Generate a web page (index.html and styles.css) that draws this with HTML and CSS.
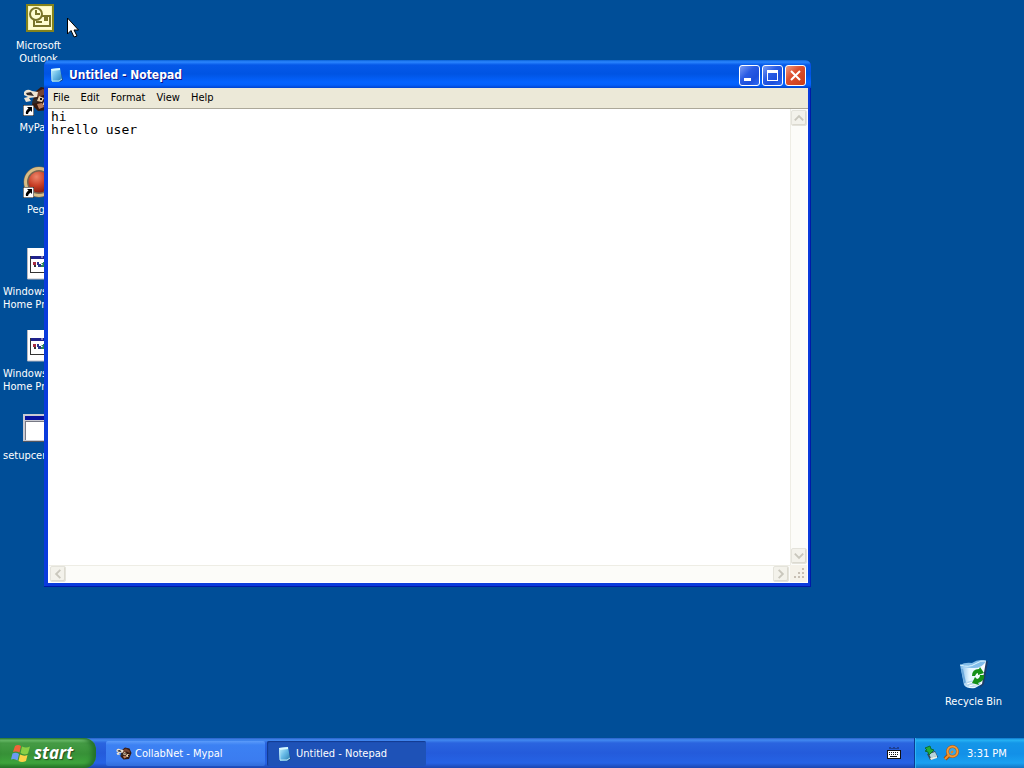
FILE: index.html
```html
<!DOCTYPE html>
<html lang="en">
<head>
<meta charset="utf-8">
<title>Desktop</title>
<link rel="stylesheet" href="styles.css">
</head>
<body>

<!-- shared shapes -->
<svg class="defs" aria-hidden="true">
  <linearGradient id="paper" x1="0" y1="0" x2="1" y2="1">
    <stop offset="0" stop-color="#c8f6ff"/><stop offset=".5" stop-color="#66b9e6"/><stop offset="1" stop-color="#297cae"/>
  </linearGradient>
  <radialGradient id="ball" cx=".4" cy=".3" r=".7">
    <stop offset="0" stop-color="#ed856a"/><stop offset=".5" stop-color="#c83e25"/><stop offset="1" stop-color="#721409"/>
  </radialGradient>
  <linearGradient id="bin" x1="0" y1="0" x2="1" y2="0">
    <stop offset="0" stop-color="#78b6e8"/><stop offset=".35" stop-color="#e4f6ff"/><stop offset="1" stop-color="#ffffff"/>
  </linearGradient>
  <symbol id="notepad" viewBox="0 0 16 16">
    <path d="M9 3h2l3 10-3 2z" fill="#194b87"/>
    <path d="M2 2l9-1 2 11-3 3H3z" fill="url(#paper)"/>
    <path d="M2 2l9-1v2l-9 1z" fill="#d8f8ff"/>
    <path d="M2.500 3L3 14h7l3-2" fill="none" stroke="#b9e7f7"/>
  </symbol>
  <symbol id="arrow" viewBox="0 0 11 11">
    <path d="M0 0h11v11H0z" fill="#000"/><path d="M.5.5h10v10H.5z" fill="#fff"/>
    <path d="M4 2h5v5L7.500 5.500Q5 7 5 9H3Q2 6 5.500 3.500z" fill="#000"/>
  </symbol>
  <symbol id="mypal" viewBox="0 0 32 32">
    <path d="M12 8l6-5 9 2 4 9-5 12-11 1-6-6z" fill="#34180f"/>
    <path d="M14 8l6-3 7 4 1 5-7-3-7 2z" fill="#754431"/>
    <path d="M1 8q3-4 8-1l6 1-1 5-8 1 2 3-5 1-2-4 4-1-4-2z" fill="#eee4d3"/>
    <path d="M3 9l5-1 3 4-7-1zM10 15l6-1-2 5-5 1z" fill="#312b2a"/>
    <path d="M16 12l5 2-2 4-5-1zM22 16l5 1-3 5-5-1z" fill="#e8cda9"/>
    <path d="M14 20l5-1 2 4-5 2z" fill="#b57958"/>
    <path d="M17 14h2v2h-2zM24 18h2v2h-2z" fill="#111"/>
  </symbol>
  <symbol id="setup" viewBox="0 0 32 32">
    <path d="M4 0h25v31H4z" fill="#fff"/><path d="M4.500 0v31H29" fill="none" stroke="#b8b8c0"/>
    <path d="M7 8h20v17H7z" fill="#333"/><path d="M8 9h18v15H8z" fill="#fff"/>
    <path d="M8 8h18v3H8z" fill="#20228c"/><path d="M18 9h2m1 0h2m1 0h1" stroke="#d6d6ec"/>
    <path d="M10 14h3v3h-3z" fill="#a72c42"/><path d="M11 17h2v2h-2z" fill="#333"/>
    <path d="M14 14h2v2h2v3h-3v-2h-1z" fill="#2b3690"/>
    <path d="M18 15h2v-1h2v5h-4v-2h2z" fill="#278255"/>
  </symbol>
</svg>

<main class="desktop">
  <div class="icons">
    <div class="icon">
      <svg viewBox="0 0 32 32">
        <path d="M3 2h28v28H3z" fill="#85831c"/><path d="M5 4h24v24H5z" fill="#f8f6b8"/>
        <path d="M6 5h22v22H6z" fill="#fffdd1"/>
        <circle cx="13" cy="12" r="6" fill="#fffdd1" stroke="#79752b" stroke-width="2"/>
        <path d="M13 8v4h4M11 18v6h16V14h-8" fill="none" stroke="#79752b" stroke-width="2"/>
        <path d="M21 15h4v4h-4z" fill="#79752b"/><path d="M13 20h6" stroke="#79752b" stroke-width="2"/>
      </svg>
      <span>Microsoft Outlook</span>
    </div>
    <div class="icon">
      <svg viewBox="0 0 32 32">
        <use href="#mypal" width="32" height="32"/>
        <use href="#arrow" y="21" width="11" height="11"/>
      </svg>
      <span>MyPal 6</span>
    </div>
    <div class="icon">
      <svg viewBox="0 0 32 32">
        <circle cx="16" cy="16" r="13" fill="url(#ball)" stroke="#766450" stroke-width="5"/>
        <circle cx="16" cy="16" r="13.500" fill="none" stroke="#d8bd86" stroke-width="3"/>
        <use href="#arrow" y="21" width="11" height="11"/>
      </svg>
      <span>Pegs</span>
    </div>
    <div class="icon long">
      <svg viewBox="0 0 32 32"><use href="#setup"/></svg>
      <span>Windows<br>Home Pro</span>
    </div>
    <div class="icon long">
      <svg viewBox="0 0 32 32"><use href="#setup"/></svg>
      <span>Windows<br>Home Pro</span>
    </div>
    <div class="icon long">
      <svg viewBox="0 0 32 32">
        <path d="M0 2h32v28H0z" fill="#55565e"/><path d="M0 2h31v27H0z" fill="#c9cad2"/>
        <path d="M2 4h28v4H2z" fill="#0711a0"/><path d="M2 9h28v19H2z" fill="#777985"/><path d="M3 10h27v18H3z" fill="#fff"/>
      </svg>
      <span>setupcer</span>
    </div>
  </div>

  <div class="icon recycle">
    <svg viewBox="0 0 32 32">
      <path d="M27 4l3-1-4 23-4 4z" fill="#1d3c68"/>
      <path d="M2 7q9 3 15-1 6-5 11-3l-4 23-7 4q-8 1-11-3z" fill="url(#bin)"/>
      <path d="M2 7q5-3 12-2 7-5 14-2-4 8-14 7Q6 10 2 7z" fill="#82bdea"/>
      <path d="M2 7q9 3 15-1 6-4 11-3" fill="none" stroke="#dbf5ff"/>
      <path d="M4 11l3 14" stroke="#6ba9dc" stroke-width="2"/>
      <path d="M7 25q7-5 16 0-5 6-14 3z" fill="#b6d8ee"/>
      <path d="M9 26q5-3 10-1m-8 3q5-2 9-1" fill="none" stroke="#fff"/>
      <path d="M14 18q0-7 7-7l1-2 4 6-6 2v-2q-2 0-3 3zM26 17q1 6-6 8l1 2-7-2 3-6 2 2q3-1 3-4z" fill="#159019"/>
    </svg>
    <span>Recycle Bin</span>
  </div>

  <section class="window">
    <header class="titlebar">
      <svg class="small" viewBox="0 0 16 16"><use href="#notepad"/></svg>
      <h1>Untitled - Notepad</h1>
      <button class="ctl" aria-label="Minimize"><svg viewBox="0 0 21 21"><path d="M5 13h7v3H5z" fill="#fff"/></svg></button>
      <button class="ctl" aria-label="Maximize"><svg viewBox="0 0 21 21"><path d="M5 5h11v11H5zm1 3v7h9V8z" fill="#fff" fill-rule="evenodd"/></svg></button>
      <button class="ctl close" aria-label="Close"><svg viewBox="0 0 21 21"><path d="M6 6l9 9m0-9l-9 9" stroke="#fff" stroke-width="2"/></svg></button>
    </header>
    <nav class="menubar">
      <button>File</button>
      <button>Edit</button>
      <button>Format</button>
      <button>View</button>
      <button>Help</button>
    </nav>
    <div class="editor">
      <textarea aria-label="Text" spellcheck="false">hi
hrello user</textarea>
      <div class="vscroll">
        <button aria-label="Scroll up"><svg viewBox="0 0 15 15"><path d="M3 10l4.500-4.500L12 10"/></svg></button>
        <button aria-label="Scroll down"><svg viewBox="0 0 15 15"><path d="M3 5l4.500 4.500L12 5"/></svg></button>
      </div>
      <div class="hscroll">
        <button aria-label="Scroll left"><svg viewBox="0 0 15 15"><path d="M10 3L5.500 7.500 10 12"/></svg></button>
        <button aria-label="Scroll right"><svg viewBox="0 0 15 15"><path d="M5 3l4.500 4.500L5 12"/></svg></button>
      </div>
      <svg class="grip" viewBox="0 0 17 17"><path d="M12 3h2v2h-2zM8 7h2v2H8zM12 7h2v2h-2zM4 11h2v2H4zM8 11h2v2H8zM12 11h2v2h-2z" fill="#c8c0b4"/></svg>
    </div>
  </section>

  <svg class="cursor" viewBox="0 0 12 21"><path d="M.5 1v16l3.500-3.500L7 20l3-1-3-6h4.500z" fill="#fff" stroke="#000"/></svg>
</main>

<footer class="taskbar">
  <button class="start">
    <svg viewBox="0 0 20 20">
      <path d="M5 3q3-2 6 0L9.500 9.500Q6 8 3 9z" fill="#f0643a"/>
      <path d="M12 3.500q4 2 8 0L18 10.500q-4 2-7.500-.5z" fill="#88cf45"/>
      <path d="M2.500 10.500Q6 9 9 11l-1.500 6.500Q4 15 1 16.500z" fill="#6b9bf2"/>
      <path d="M10 11.500q4 2 7.500.5L16 18q-4 2-7.500 0z" fill="#fbd247"/>
    </svg>
    start
  </button>
  <div class="tasks">
    <button class="task"><svg class="small" viewBox="0 0 32 32"><use href="#mypal"/></svg>CollabNet - Mypal</button>
    <button class="task active"><svg class="small" viewBox="0 0 16 16"><use href="#notepad"/></svg>Untitled - Notepad</button>
  </div>
  <svg class="small keyboard" viewBox="0 0 16 16">
    <path d="M4 4V2m2 2V3m2 1V2m2 2V3m2 1V2" stroke="#152350"/>
    <path d="M1 5h14v9H1z" fill="#111"/><path d="M2 6h12v7H2z" fill="#fff"/>
    <path d="M3 7.500h10M3 9.500h10" stroke="#111" stroke-dasharray="1 1"/><path d="M4 11.500h7" stroke="#111"/>
  </svg>
  <div class="tray">
    <svg class="small" viewBox="0 0 16 16">
      <path d="M4 9l8-3 3 6-8 3z" fill="#364a58"/><path d="M6 9l6-2 2 4-6 2z" fill="#b6d4dc"/><path d="M7 13l7-2v2l-6 2z" fill="#e8efe7"/>
      <path d="M2 3l5-2 1 3 3 1-5 5-1-3-3-1 2-1z" fill="#22ad37" stroke="#0c6d35"/>
    </svg>
    <svg class="small" viewBox="0 0 16 16">
      <path d="M6 10l-4 4" stroke="#a44b08" stroke-width="4"/><circle cx="9.500" cy="6.500" r="5" fill="#35a7e9" stroke="#a85313" stroke-width="3"/>
      <circle cx="9.500" cy="6.500" r="5" fill="none" stroke="#f39a35" stroke-width="2"/><path d="M6 10l-4 4" stroke="#f39127" stroke-width="2"/><path d="M8 8l2-2" stroke="#e6821c" stroke-width="2"/>
    </svg>
    <time>3:31 PM</time>
  </div>
</footer>

</body>
</html>
```
FILE: styles.css
```css
* {
  box-sizing: border-box;
}
body {
  margin: 0;
  height: 100vh;
  display: flex;
  flex-direction: column;
  overflow: hidden;
  background: #004e98;
  font-family: "DejaVu Sans Condensed", Tahoma, sans-serif;
  font-size: 11px;
  line-height: 13px;
}
button {
  margin: 0;
  padding: 0;
  border: 0;
  background: none;
  font: inherit;
  color: inherit;
}
svg {
  display: block;
  flex: none;
}
.defs {
  position: absolute;
  width: 0;
  height: 0;
}
.small {
  width: 16px;
  height: 16px;
}

/* desktop */
.desktop {
  position: relative;
  flex: 1;
}
.icons {
  display: flex;
  flex-direction: column;
  width: 77px;
}
.icon {
  display: flex;
  flex-direction: column;
  align-items: center;
  gap: 5px;
  width: 77px;
  height: 82px;
  padding-top: 2px;
  color: #fff;
  text-align: center;
}
.icon svg {
  width: 32px;
  height: 32px;
}
/* labels that fill the whole cell */
.long span {
  width: 100%;
  padding-left: 3px;
  text-align: left;
}
.recycle {
  position: absolute;
  right: 12px;
  bottom: 0;
}
.cursor {
  position: absolute;
  left: 67px;
  top: 17px;
  width: 12px;
  height: 21px;
}

/* notepad window */
.window {
  position: absolute;
  left: 44px;
  top: 60px;
  width: 767px;
  height: 527px;
  display: flex;
  flex-direction: column;
  padding: 0 3px 4px 4px;
  background: #0a3bdc;
  border-radius: 6px 6px 0 0;
  box-shadow: inset -1px -1px #0019a8;
}
.titlebar {
  display: flex;
  align-items: center;
  gap: 2px;
  height: 28px;
  margin: 0 -3px 0 -4px;
  padding: 2px 5px 0;
  border-radius: 6px 6px 0 0;
  background: linear-gradient(#0a62d8 0, #2b86ff 2px, #0558e8 5px, #0054e3 14px, #0463ff 22px, #0460fa 25px, #0043cf 28px);
}
.titlebar h1 {
  flex: 1;
  margin: 0 0 0 2px;
  color: #fff;
  font-size: 12px;
  line-height: 16px;
  text-shadow: 1px 1px #0f1089;
}
.ctl {
  width: 21px;
  height: 21px;
  border: 1px solid #fff;
  border-radius: 3px;
  background: linear-gradient(135deg, #7c9cf4, #2a5ce4 40%, #1c4fdc 70%, #2f6af5);
}
.ctl svg {
  width: 21px;
  height: 21px;
  margin: -1px;
}
.close {
  background: linear-gradient(135deg, #ef9b82, #dd5030 40%, #ca3c15);
}
.menubar {
  display: flex;
  gap: 1px;
  height: 20px;
  padding-bottom: 1px;
  background: #ece9d8;
}
.menubar button {
  padding: 0 5px;
}
.editor {
  flex: 1;
  display: grid;
  grid-template: 1fr 17px / 1fr 17px;
  padding: 0 1px 1px;
  border-top: 1px solid #aca899;
  background: #fff;
}
.editor textarea {
  width: 100%;
  height: 100%;
  margin: 0;
  padding: 1px 2px;
  border: 0;
  outline: 0;
  resize: none;
  overflow: hidden;
  background: #fff;
  color: #000;
  font: 13px/13px "DejaVu Sans Mono", monospace;
}
.vscroll, .hscroll {
  display: flex;
  justify-content: space-between;
  background: #fcfcf9;
}
.vscroll {
  flex-direction: column;
  padding: 1px 0;
  border-left: 1px solid #eeede5;
}
.hscroll {
  padding: 0 1px;
  border-top: 1px solid #eeede5;
}
.vscroll button, .hscroll button {
  width: 16px;
  height: 16px;
  border: 1px solid #e4e3db;
  border-radius: 2px;
  background: #f3f2eb;
  box-shadow: inset -1px -1px #dcdad0;
}
.vscroll svg, .hscroll svg {
  width: 14px;
  height: 14px;
  fill: none;
  stroke: #c9c7bd;
  stroke-width: 2;
}
.grip {
  width: 17px;
  height: 17px;
  background: #f5f2e9;
}

/* taskbar */
.taskbar {
  display: flex;
  height: 30px;
  color: #fff;
  background: linear-gradient(#2860c8 0, #428af0 2px, #2a64df 5px, #245bdb 15px, #2663e5 25px, #1c46b0 30px);
}
.start {
  display: flex;
  align-items: center;
  gap: 4px;
  width: 96px;
  padding: 0 0 1px 10px;
  border-radius: 0 12px 12px 0;
  background: linear-gradient(#2d7e2f 0, #75c573 2px, #459b45 5px, #379137 16px, #3da43c 25px, #287828 30px);
  box-shadow: inset -4px 0 5px #23702a;
  font: italic bold 17px/24px "Open Sans", sans-serif;
  text-shadow: 1px 1px 1px #234a20;
}
.start svg {
  width: 20px;
  height: 20px;
}
.tasks {
  flex: 1;
  display: flex;
  gap: 2px;
  padding: 3px 10px 2px;
}
.task {
  display: flex;
  align-items: center;
  gap: 3px;
  width: 159px;
  padding: 0 10px;
  border-radius: 2px;
  background: linear-gradient(#5b9bfa 0, #3c81f3 4px, #3b7cf0 20px, #316ddb 25px);
}
.active {
  background: #1e52b7;
  box-shadow: inset 1px 1px 1px #123a8f;
}
.keyboard {
  align-self: center;
  margin-right: 12px;
}
.tray {
  display: flex;
  align-items: center;
  gap: 4px;
  width: 110px;
  padding-left: 8px;
  border-left: 1px solid #0a3c93;
  background: linear-gradient(#0d75cc 0, #27b3f4 2px, #1496e8 5px, #1290e8 16px, #19a1f1 25px, #1275c4 30px);
  box-shadow: inset 1px 0 #30b5f2;
}
.tray time {
  margin-left: 4px;
}
```
